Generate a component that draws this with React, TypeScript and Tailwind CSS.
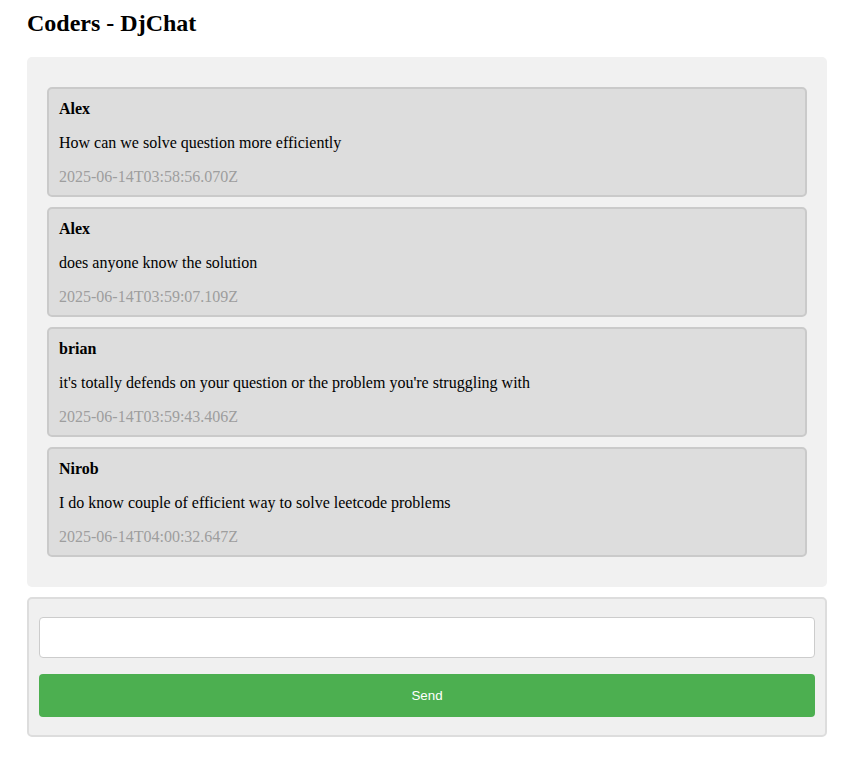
import React from "react";

const messages = [
  { user: "Alex", text: "How can we solve question more efficiently", ts: "2025-06-14T03:58:56.070Z" },
  { user: "Alex", text: "does anyone know the solution", ts: "2025-06-14T03:59:07.109Z" },
  { user: "brian", text: "it's totally defends on your question or the problem you're struggling with", ts: "2025-06-14T03:59:43.406Z" },
  { user: "Nirob", text: "I do know couple of efficient way to solve leetcode problems", ts: "2025-06-14T04:00:32.647Z" },
];

export default function App() {
  return (
    <div
      className="min-h-screen bg-white pl-[27px] pt-[9px] text-black"
      style={{ fontFamily: '"Liberation Serif", "Times New Roman", serif' }}
    >
      <h1 className="text-[24px] font-bold leading-[28px]">Coders - DjChat</h1>
      <div className="mt-[20px] w-[800px]">
        <div className="flex flex-col gap-[10px] rounded-[5px] bg-[#f1f1f1] px-[20px] py-[30px]">
          {messages.map((m, i) => (
            <div
              key={i}
              className="rounded-[5px] border-2 border-[#cacaca] bg-[#dddddd] px-[10px] pt-[11px] pb-[9px] text-[16px] leading-[18px]"
            >
              <div className="font-bold">{m.user}</div>
              <div className="mt-[16px]">{m.text}</div>
              <div className="mt-[16px] text-[#9e9e9e]">{m.ts}</div>
            </div>
          ))}
        </div>
        <div className="mt-[10px] flex flex-col rounded-[5px] border-2 border-[#dddddd] bg-[#f0f0f0] px-[10px] py-[18px]">
          <input
            type="text"
            className="h-[41px] w-full rounded-[4px] border border-[#cccccc] bg-white px-[10px] outline-none"
          />
          <button
            className="mt-[16px] h-[43px] w-full rounded-[4px] bg-[#4caf50] text-[13.33px] text-white"
            style={{ fontFamily: '"Liberation Sans", Arial, sans-serif' }}
          >
            Send
          </button>
        </div>
      </div>
    </div>
  );
}
